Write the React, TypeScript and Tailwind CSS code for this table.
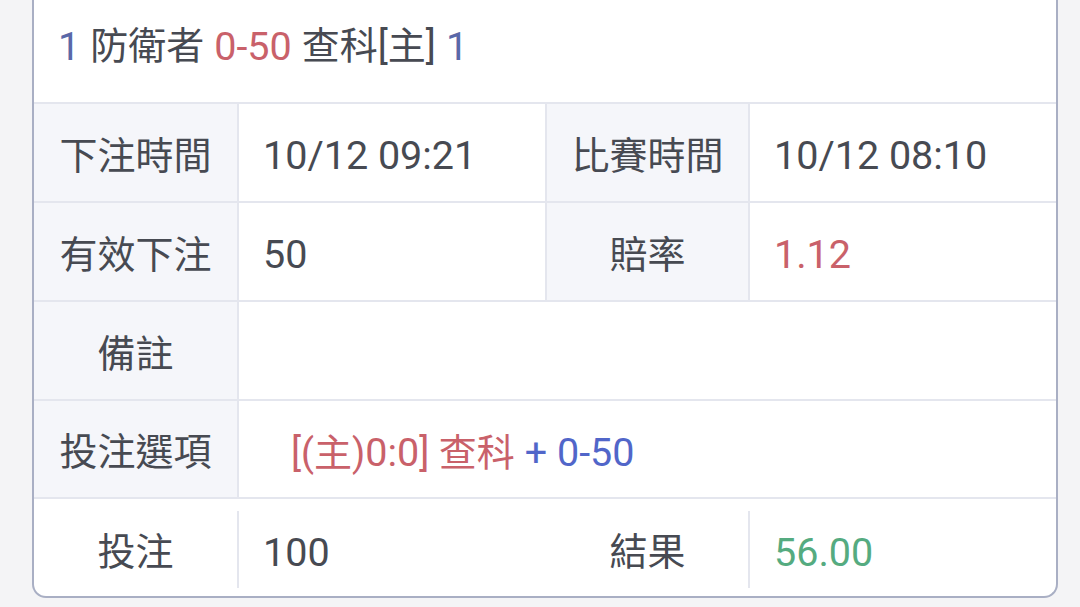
import React from 'react';

const font = { fontFamily: 'Roboto, "Noto Sans CJK TC", sans-serif' };

const Label = ({ children, w }: { children: React.ReactNode; w: string }) => (
  <div className={`${w} shrink-0 bg-[#f5f6fa] flex items-center justify-center pt-[7px] text-[#474a52]`}>{children}</div>
);

const Value = ({ children, w, className = '' }: { children?: React.ReactNode; w: string; className?: string }) => (
  <div className={`${w} shrink-0 flex items-center pl-[24px] pt-[7px] text-[39.5px] ${className}`}>{children}</div>
);

const Num = ({ children, className = '' }: { children: React.ReactNode; className?: string }) => (
  <span className={`text-[39.5px] ${className}`}>{children}</span>
);

const App = () => {
  return (
    <div className="w-[1080px] h-[607px] bg-[#f4f4f6] overflow-hidden" style={font}>
      <div className="ml-[32px] w-[1026px] h-[598px] bg-white border-2 border-t-0 border-[#a9afc4] rounded-b-[14px] flex flex-col text-[38px] text-[#474a52] overflow-hidden">
        {/* header */}
        <div className="h-[104px] shrink-0 flex items-center pl-[24px] pb-[9px] border-b-2 border-[#e4e6ee]">
          <Num className="text-[#5a68a8]">1</Num>
          <span className="ml-[10px]">防衛者</span>
          <Num className="ml-[10px] text-[#c9616a]">0-50</Num>
          <span className="ml-[10px]">查科[主]</span>
          <Num className="ml-[10px] text-[#5a68a8]">1</Num>
        </div>

        <div className="h-[99px] shrink-0 flex border-b-2 border-[#e4e6ee]">
          <Label w="w-[203px]">下注時間</Label>
          <div className="w-[2px] bg-[#e4e6ee]" />
          <Value w="w-[306px]">10/12 09:21</Value>
          <div className="w-[2px] bg-[#e4e6ee]" />
          <Label w="w-[201px]">比賽時間</Label>
          <div className="w-[2px] bg-[#e4e6ee]" />
          <Value w="w-[306px]">10/12 08:10</Value>
        </div>

        <div className="h-[99px] shrink-0 flex border-b-2 border-[#e4e6ee]">
          <Label w="w-[203px]">有效下注</Label>
          <div className="w-[2px] bg-[#e4e6ee]" />
          <Value w="w-[306px]">50</Value>
          <div className="w-[2px] bg-[#e4e6ee]" />
          <Label w="w-[201px]">賠率</Label>
          <div className="w-[2px] bg-[#e4e6ee]" />
          <Value w="w-[306px]" className="text-[#c9616a]">1.12</Value>
        </div>

        <div className="h-[99px] shrink-0 flex border-b-2 border-[#e4e6ee]">
          <Label w="w-[203px]">備註</Label>
          <div className="w-[2px] bg-[#e4e6ee]" />
          <Value w="w-[817px]" />
        </div>

        <div className="h-[98px] shrink-0 flex border-b-2 border-[#e4e6ee]">
          <Label w="w-[203px]">投注選項</Label>
          <div className="w-[2px] bg-[#e4e6ee]" />
          <div className="flex-1 flex items-center pl-[52px] pt-[7px]">
            <span className="text-[#c9616a]">
              [(主)<Num>0:0</Num>] 查科
            </span>
            <Num className="ml-[10px] text-[#5166c9]">+ 0-50</Num>
          </div>
        </div>

        <div className="flex-1 flex items-center pt-[3px]">
          <div className="w-[203px] shrink-0 flex items-center justify-center pt-[7px]">投注</div>
          <div className="w-[2px] h-[77px] bg-[#e4e6ee]" />
          <Value w="w-[306px]">100</Value>
          <div className="w-[2px]" />
          <div className="w-[201px] shrink-0 flex items-center justify-center pt-[7px]">結果</div>
          <div className="w-[2px] h-[77px] bg-[#e4e6ee]" />
          <Value w="w-[306px]" className="text-[#55ab80]">56.00</Value>
        </div>
      </div>
    </div>
  );
};

export default App;
